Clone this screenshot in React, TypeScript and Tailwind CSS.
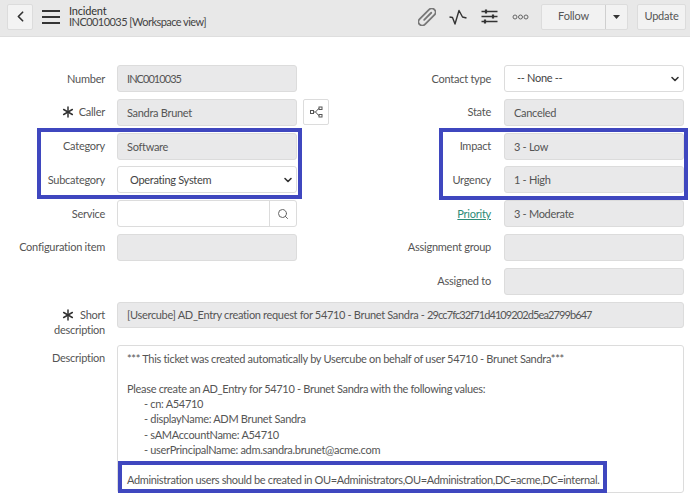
import { Search, ChevronLeft, ChevronDown, Asterisk } from "lucide-react";
import type { ReactNode } from "react";

function Star() {
  return <Asterisk size={20} strokeWidth={1.8} className="text-[#333] mr-[1px] -mt-[2px] -mb-[3px]" />;
}

function Label({ children, star, link }: { children: ReactNode; star?: boolean; link?: boolean }) {
  return (
    <div className={`w-[105px] shrink-0 flex justify-end items-start pt-[5.5px] text-[11px] tracking-[-0.25px] leading-[15px] text-right ${link ? "text-[#2e8b78] underline" : "text-[#555]"}`}>
      {star && <Star />}
      <span className="whitespace-nowrap">{children}</span>
    </div>
  );
}

function ReadOnly({ value, tight }: { value?: string; tight?: boolean }) {
  return (
    <div className={`flex-1 h-[27px] rounded-[3px] border border-[#dcdcdc] bg-[#e9e9ea] px-[9px] text-[11px] leading-[25px] text-[#555] whitespace-nowrap overflow-hidden ${tight ? "tracking-[-0.95px]" : "tracking-[-0.3px]"}`}>
      {value}
    </div>
  );
}

function SelectBox({ value }: { value: string }) {
  return (
    <div className="flex-1 h-[27px] rounded-[3px] border border-[#dcdcdc] bg-white pl-[12px] pr-[2px] flex items-center justify-between text-[11px] tracking-[-0.3px] text-[#444]">
      <span>{value}</span>
      <ChevronDown size={12} strokeWidth={3.2} className="text-[#333]" />
    </div>
  );
}

function Row({ label, star, link, children }: { label: string; star?: boolean; link?: boolean; children: ReactNode }) {
  return (
    <div className="flex items-start gap-[12px] h-[27px]">
      <Label star={star} link={link}>{label}</Label>
      <div className="flex flex-1">{children}</div>
    </div>
  );
}

function RightRow({ label, link, children }: { label: string; link?: boolean; children: ReactNode }) {
  return (
    <div className="flex items-start gap-[13px] h-[27px] pl-[89px]">
      <Label link={link}>{label}</Label>
      {children}
    </div>
  );
}

function Box({ className }: { className: string }) {
  return <div className={`absolute border-[4px] border-[#3f47bf] pointer-events-none ${className}`} />;
}

export default function App() {
  return (
    <div className="relative w-[690px] h-[499px] overflow-hidden bg-white" style={{ fontFamily: "Lato, 'Noto Sans', sans-serif" }}>
      <header className="h-[37px] bg-[#e8e8e8] border-b border-[#dedede] flex items-center pl-[7px] pr-[4px]">
        <button className="w-[26px] h-[26px] -mt-[3px] rounded-[2px] border border-[#dcdcdc] bg-[#f3f3f3] flex items-center justify-center text-[#333]">
          <ChevronLeft size={17} strokeWidth={2.4} />
        </button>
        <div className="ml-[9px] -mt-[2px] w-[18px] flex flex-col gap-[3.5px]">
          <div className="h-[2.5px] bg-[#333]" />
          <div className="h-[2.5px] bg-[#333]" />
          <div className="h-[2.5px] bg-[#333]" />
        </div>
        <div className="ml-[9px] -mt-[4px] text-[11px] tracking-[-0.55px] leading-[11.5px] text-[#444] whitespace-nowrap">
          <div className="text-[#333] tracking-[-0.2px]">Incident</div>
          <div>INC0010035 [Workspace view]</div>
        </div>
        <div className="ml-auto -mt-[3px] flex items-center">
          <svg width="18" height="18" viewBox="0 0 18 18" fill="none" stroke="#777" strokeWidth="1.8" strokeLinecap="round">
            <g transform="rotate(45 9 9)">
              <rect x="5.2" y="-1.5" width="7.6" height="21" rx="3.8" />
              <path d="M9 3v10" />
            </g>
          </svg>
          <svg width="18" height="16" viewBox="0 0 18 16" fill="none" stroke="#333" strokeWidth="1.4" className="ml-[13px]">
            <path d="M0.5 8 L3.5 8.5 L6 15 L10 1.5 L13.5 8 L17.5 9" strokeLinejoin="round" />
          </svg>
          <svg width="17" height="17" viewBox="0 0 17 17" fill="none" stroke="#333" strokeWidth="1.3" className="ml-[14px]">
            <path d="M0.5 3.5h16M0.5 8.5h16M0.5 13.5h16" />
            <path d="M5 1.5v4M12 6.5v4M4 11.5v4" strokeWidth="2.2" />
          </svg>
          <svg width="17" height="6" viewBox="0 0 17 6" fill="none" stroke="#666" strokeWidth="1" className="ml-[14px]">
            <circle cx="3" cy="3" r="2" />
            <circle cx="8.5" cy="3" r="2" />
            <circle cx="14" cy="3" r="2" />
          </svg>
          <div className="ml-[12px] h-[26px] w-[87px] flex rounded-[2px] border border-[#dcdcdc] bg-[#f2f2f2] text-[11px] tracking-[-0.2px] text-[#555]">
            <div className="flex-1 flex items-center justify-center border-r border-[#cfcfcf]">Follow</div>
            <div className="w-[21px] flex items-center justify-center">
              <svg width="7" height="4" viewBox="0 0 7 4"><path d="M0 0h7L3.5 4z" fill="#333" /></svg>
            </div>
          </div>
          <div className="ml-[9px] w-[49px] h-[26px] flex items-center justify-center rounded-[2px] border border-[#dcdcdc] bg-[#f2f2f2] text-[11px] tracking-[-0.2px] text-[#555]">Update</div>
        </div>
      </header>

      <main className="pr-[6px] pt-[28px]">
        <div className="flex">
          <div className="w-[297px] flex flex-col gap-[6.75px]">
            <Row label="Number"><ReadOnly value="INC0010035" tight /></Row>
            <div className="w-[329px] flex items-start gap-[12px] h-[27px]">
              <Label star>Caller</Label>
              <div className="flex flex-1 gap-[6px]">
                <ReadOnly value="Sandra Brunet" />
                <button className="w-[26px] h-[26px] shrink-0 rounded-[2px] border border-[#dcdcdc] bg-white flex items-center justify-center">
                  <svg width="13" height="12" viewBox="0 0 13 12" fill="none" stroke="#555" strokeWidth="1">
                    <rect x="0.5" y="4.5" width="3" height="3" />
                    <rect x="9" y="1" width="3" height="2.5" />
                    <rect x="9" y="8.5" width="3" height="2.5" />
                    <path d="M3.5 6h2M5.5 6L9 2.2M5.5 6L9 9.8" />
                  </svg>
                </button>
              </div>
            </div>
            <Row label="Category"><ReadOnly value="Software" /></Row>
            <Row label="Subcategory"><SelectBox value="Operating System" /></Row>
            <Row label="Service">
              <div className="flex-1 h-[27px] rounded-[3px] border border-[#dcdcdc] bg-white flex justify-end">
                <div className="w-[27px] border-l border-[#dcdcdc] flex items-center justify-center">
                  <Search size={12} className="text-[#666]" />
                </div>
              </div>
            </Row>
            <Row label="Configuration item"><ReadOnly /></Row>
          </div>

          <div className="w-[387px] flex flex-col gap-[6.75px]">
            <RightRow label="Contact type"><SelectBox value="-- None --" /></RightRow>
            <RightRow label="State"><ReadOnly value="Canceled" /></RightRow>
            <RightRow label="Impact"><ReadOnly value="3 - Low" /></RightRow>
            <RightRow label="Urgency"><ReadOnly value="1 - High" /></RightRow>
            <RightRow label="Priority" link><ReadOnly value="3 - Moderate" /></RightRow>
            <RightRow label="Assignment group"><ReadOnly /></RightRow>
            <RightRow label="Assigned to"><ReadOnly /></RightRow>
          </div>
        </div>

        <div className="mt-[7px] h-[26px] flex items-start gap-[12px]">
          <div className="w-[105px] shrink-0 flex flex-col items-end pt-[5px] text-[11px] tracking-[-0.25px] leading-[15px] text-[#555]">
            <div className="flex items-start">
              <Star />
              <span className="ml-[1px]">Short</span>
            </div>
            <span>description</span>
          </div>
          <div className="flex-1">
            <div className="h-[26px] rounded-[3px] border border-[#dcdcdc] bg-[#e9e9ea] px-[9px] text-[11px] leading-[24px] text-[#555] whitespace-nowrap overflow-hidden">
              <span className="tracking-[-0.33px]">[Usercube] AD_Entry creation request for 54710 - Brunet Sandra - </span>
              <span className="tracking-[-0.9px]">29cc7fc32f71d4109202d5ea2799b647</span>
            </div>
          </div>
        </div>

        <div className="mt-[17px] flex items-start gap-[12px]">
          <div className="w-[105px] shrink-0 text-right text-[11px] tracking-[-0.25px] leading-[15px] text-[#555] pt-[5px]">Description</div>
          <div className="flex-1 h-[148px] rounded-[3px] border border-[#dcdcdc] bg-white pl-[9px] pt-[5px] text-[11px] tracking-[-0.31px] leading-[15.2px] text-[#555] whitespace-nowrap">
            <div>*** This ticket was created automatically by Usercube on behalf of user 54710 - Brunet Sandra***</div>
            <div className="mt-[15.2px]">Please create an AD_Entry for 54710 - Brunet Sandra with the following values:</div>
            <div className="pl-[17px]">
              <div>- cn: A54710</div>
              <div>- displayName: ADM Brunet Sandra</div>
              <div>- sAMAccountName: A54710</div>
              <div>- userPrincipalName: adm.sandra.brunet@acme.com</div>
            </div>
            <div className="mt-[15.2px] tracking-[-0.35px]">Administration users should be created in OU=Administrators,OU=Administration,DC=acme,DC=internal.</div>
          </div>
        </div>
      </main>

      <Box className="left-[37px] top-[128px] w-[265px] h-[71px]" />
      <Box className="left-[439px] top-[128px] w-[249px] h-[72px]" />
      <Box className="left-[118px] top-[461px] w-[489px] h-[32px]" />
    </div>
  );
}
